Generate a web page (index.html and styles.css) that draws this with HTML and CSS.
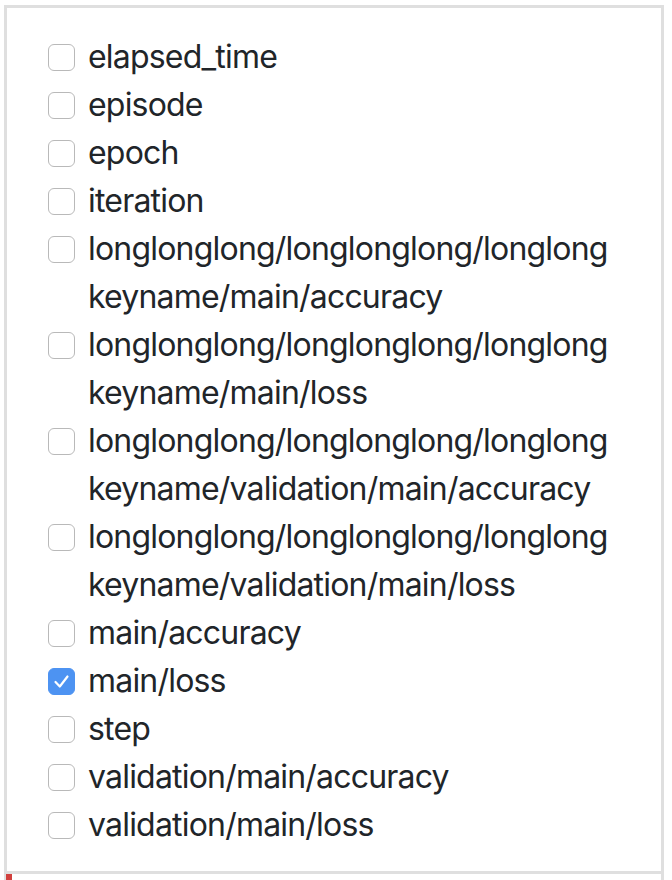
FILE: index.html
```html
<!DOCTYPE html>
<html>
<head>
<meta charset="utf-8">
<link rel="stylesheet" href="styles.css">
</head>
<body>
<div class="frame">
  <div class="panel">
    <ul class="key-list">
      <li class="key"><span class="box"></span><span class="name">elapsed_time</span></li>
      <li class="key"><span class="box"></span><span class="name">episode</span></li>
      <li class="key"><span class="box"></span><span class="name">epoch</span></li>
      <li class="key"><span class="box"></span><span class="name">iteration</span></li>
      <li class="key"><span class="box"></span><span class="name">longlonglong/longlonglong/longlong keyname/main/accuracy</span></li>
      <li class="key"><span class="box"></span><span class="name">longlonglong/longlonglong/longlong keyname/main/loss</span></li>
      <li class="key"><span class="box"></span><span class="name">longlonglong/longlonglong/longlong keyname/validation/main/accuracy</span></li>
      <li class="key"><span class="box"></span><span class="name">longlonglong/longlonglong/longlong keyname/validation/main/loss</span></li>
      <li class="key"><span class="box"></span><span class="name">main/accuracy</span></li>
      <li class="key"><span class="box checked"><svg viewBox="0 0 27 27" width="27" height="27"><path d="M7.5 14 L11.8 18.5 L19.5 8.5" fill="none" stroke="#fff" stroke-width="2.2" stroke-linecap="round" stroke-linejoin="round"/></svg></span><span class="name">main/loss</span></li>
      <li class="key"><span class="box"></span><span class="name">step</span></li>
      <li class="key"><span class="box"></span><span class="name">validation/main/accuracy</span></li>
      <li class="key"><span class="box"></span><span class="name">validation/main/loss</span></li>
    </ul>
  </div>
  <div class="marker"></div>
</div>
</body>
</html>
```

FILE: styles.css
```css
html, body {
  margin: 0;
  padding: 0;
  background: #ffffff;
}
body {
  font-family: Inter, "Liberation Sans", sans-serif;
  color: #212529;
}
.frame {
  margin: 0 8px 0 4px;
  border-left: 3px solid #dfdfdf;
  border-right: 3px solid #dfdfdf;
  height: 880px;
  box-sizing: border-box;
}
.panel {
  margin-top: 5px;
  border-top: 3px solid #dfdfdf;
  border-bottom: 3px solid #dfdfdf;
  padding: 25px 20px 22px 41px;
}
.key-list {
  list-style: none;
  margin: 0;
  padding: 0;
}
.key {
  display: flex;
  align-items: flex-start;
  gap: 13px;
  font-size: 32px;
  line-height: 48px;
  letter-spacing: -0.8px;
}
.box {
  flex: none;
  width: 27px;
  height: 27px;
  box-sizing: border-box;
  margin-top: 11px;
  border: 1.5px solid #b9b9b9;
  border-radius: 6px;
  background: #fff;
  position: relative;
}
.box.checked {
  background: #4d93f2;
  border-color: #4d93f2;
}
.box.checked svg {
  position: absolute;
  left: -1.5px;
  top: -1.5px;
}
.name {
  min-width: 0;
}
.marker {
  width: 6px;
  height: 8px;
  margin-left: -1px;
  background: #d1403d;
}
```
